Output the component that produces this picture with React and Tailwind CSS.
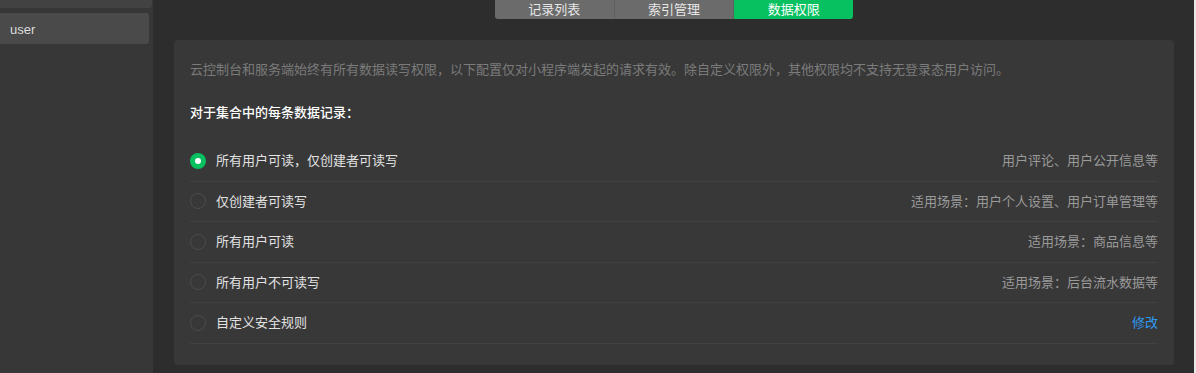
import React, { useState } from 'react';

const font = { fontFamily: '"Liberation Sans", "Noto Sans CJK SC", sans-serif' };

export default function App() {
  const [tab, setTab] = useState('perm');
  const [rule, setRule] = useState('readAll');

  const tabs = [{
    id: 'records',
    name: '记录列表'
  }, {
    id: 'index',
    name: '索引管理'
  }, {
    id: 'perm',
    name: '数据权限'
  }];

  const rules = [{
    id: 'readAll',
    name: '所有用户可读，仅创建者可读写',
    hint: '用户评论、用户公开信息等'
  }, {
    id: 'creator',
    name: '仅创建者可读写',
    hint: '适用场景：用户个人设置、用户订单管理等'
  }, {
    id: 'readOnly',
    name: '所有用户可读',
    hint: '适用场景：商品信息等'
  }, {
    id: 'none',
    name: '所有用户不可读写',
    hint: '适用场景：后台流水数据等'
  }, {
    id: 'custom',
    name: '自定义安全规则',
    link: '修改'
  }];

  return <div style={font} className="flex h-[373px] w-[1196px] overflow-hidden bg-[#2d2d2d] text-[13px]">
      {/* 集合列表 */}
      <div className="w-[153px] shrink-0 bg-[#373737]">
        <div className="h-[8px] w-[152px] rounded-br-[3px] bg-[#424242]"></div>
        <div className="mt-[5px] flex h-[31px] w-[149px] items-center rounded-r-[3px] bg-[#4a4a4a] pl-[10px] pt-[2px] text-[#dcdcdc]">
          user
        </div>
      </div>

      <div className="flex-1 flex flex-col">
        {/* 标签 */}
        <div className="flex justify-center pl-[1px]">
          <div className="flex h-[19px] w-[358px] overflow-hidden rounded-b-[3px]">
            {tabs.map(t => <button key={t.id} onClick={() => setTab(t.id)} className={`flex-1 leading-[19px] text-[13px] ${tab === t.id ? 'bg-[#07c160] text-white' : 'bg-[#6b6b6b] text-[#e6e6e6] border-r border-[#5e5e5e]'}`}>
                {t.name}
              </button>)}
          </div>
        </div>

        {/* 权限卡片 */}
        <div className="ml-[21px] mr-[20px] mt-[21px] rounded-[4px] bg-[#383838] px-[16px] pt-[20px] pb-[21px]">
          <p className="leading-[20px] text-[#7b7b7b]">
            云控制台和服务端始终有所有数据读写权限，以下配置仅对小程序端发起的请求有效。除自定义权限外，其他权限均不支持无登录态用户访问。
          </p>
          <p className="mt-[23px] leading-[20px] font-medium text-white">对于集合中的每条数据记录：</p>
          <div className="mt-[18px]">
            {rules.map(r => <div key={r.id} onClick={() => setRule(r.id)} className="flex h-[40.5px] cursor-pointer items-center border-b border-[#414141]">
                {rule === r.id ? <span className="flex h-[16px] w-[16px] items-center justify-center rounded-full bg-[#07c160]">
                    <span className="h-[6px] w-[6px] rounded-full bg-white"></span>
                  </span> : <span className="h-[16px] w-[16px] rounded-full border border-[#4c4c4c]"></span>}
                <span className="ml-[10px] text-[#e2e2e2]">{r.name}</span>
                <span className="ml-auto">
                  {r.link ? <a className="text-[#2f9bf0]">{r.link}</a> : <span className="text-[#9a9a9a]">{r.hint}</span>}
                </span>
              </div>)}
          </div>
        </div>
      </div>

      <div className="w-[2px] shrink-0 bg-[#e8e8e8]"></div>
    </div>;
}
